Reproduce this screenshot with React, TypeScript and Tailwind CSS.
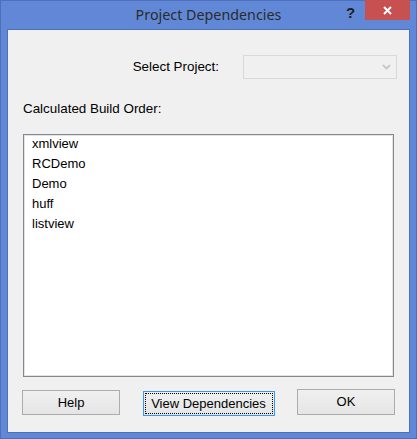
import React from 'react';

const items = ['xmlview', 'RCDemo', 'Demo', 'huff', 'listview'];

function Button({ label, focused, className }: { label: string; focused?: boolean; className?: string }) {
  return (
    <div
      className={`relative flex items-center justify-center h-[25px] border bg-gradient-to-b from-[#f0f0f0] to-[#e5e5e5] text-[13px] text-black ${
        focused ? 'border-[#3399ff]' : 'border-[#acacac]'
      } ${className ?? ''}`}
    >
      {focused && <span className="absolute inset-[1px] border border-dotted border-black" />}
      <span className="relative">{label}</span>
    </div>
  );
}

export default function App() {
  return (
    <div
      className="w-[417px] h-[439px] bg-[#6188d6] border border-[#4d70b8] flex flex-col px-[6px] pb-[5px]"
      style={{ fontFamily: '"Liberation Sans", Arial, sans-serif' }}
    >
      {/* title bar */}
      <div className="relative h-[28px] shrink-0">
        <div
          className="absolute left-0 right-0 top-[3px] text-center text-[14.3px] text-[#2b2b2b]"
          style={{ fontFamily: '"Noto Sans", sans-serif' }}
        >
          Project Dependencies
        </div>
        <div className="absolute left-[339px] top-[1px] text-[15px] font-bold text-[#1e1e1e]">?</div>
        <div className="absolute left-[358px] top-[-1px] w-[45px] h-[20px] bg-[#c75050] flex items-center justify-center">
          <svg width="9" height="9" viewBox="0 0 9 9">
            <path d="M1 1L8 8M8 1L1 8" stroke="#fff" strokeWidth="2" />
          </svg>
        </div>
      </div>

      {/* client */}
      <div className="flex-1 border border-[#4d70b8] bg-[#f0f0f0] flex flex-col">
        <div className="mt-[25px] flex items-center justify-end pr-[12px] gap-[24px] h-[24px]">
          <span className="text-[13.4px] text-black">Select Project:</span>
          <div className="w-[154px] h-[24px] border border-[#d9d9d9] bg-[#f0f0f0] flex items-center justify-end pr-[5px]">
            <svg width="9" height="6" viewBox="0 0 9 6">
              <path d="M1 1L4.5 4.5L8 1" stroke="#bfbfbf" strokeWidth="1.6" fill="none" />
            </svg>
          </div>
        </div>

        <div className="mt-[22px] ml-[15px] text-[13.4px] leading-[15px] text-black">Calculated Build Order:</div>

        <div className="mt-[18px] mx-[15px] h-[243px] border border-[#828790] bg-white">
          <div className="h-full border border-[#e3e3e3] pl-[7px]">
            <div className="-mt-[2px]">
              {items.map((it) => (
                <div key={it} className="text-[13px] leading-[20px] text-black">
                  {it}
                </div>
              ))}
            </div>
          </div>
        </div>

        <div className="mt-[12px] px-[14px] flex items-start justify-between">
          <Button label="Help" className="w-[98px] mt-[1px]" />
          <Button label="View Dependencies" focused className="w-[132px] mt-[2px]" />
          <Button label="OK" className="w-[98px] h-[26px]" />
        </div>
      </div>
    </div>
  );
}
